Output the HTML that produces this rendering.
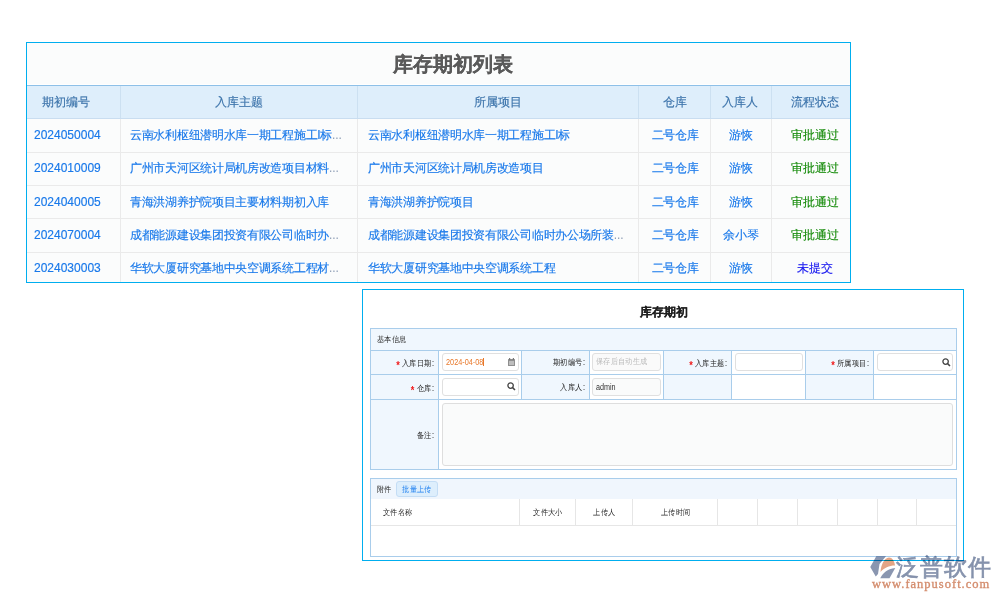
<!DOCTYPE html><html><head><meta charset="utf-8"><style>
html,body{margin:0;padding:0;width:1000px;height:600px;overflow:hidden;background:#fff;}
body{position:relative;font-family:"Liberation Sans",sans-serif;}
div{box-sizing:border-box;}
.t{position:absolute;white-space:nowrap;overflow:visible;}
</style></head><body>
<div style="position:absolute;left:26px;top:42px;width:825px;height:241px;border:1px solid #00AEEF;background:#FBFCFC;"></div>
<div class="t" style="left:353px;top:44px;width:200px;height:41px;line-height:41px;text-align:center;font-size:20px;font-weight:bold;color:#5A5A5A;-webkit-text-stroke:0.2px #5A5A5A;">库存期初列表</div>
<div style="position:absolute;left:27px;top:84px;width:823px;height:1px;background:#fff;"></div>
<div style="position:absolute;left:27px;top:85px;width:823px;height:1px;background:#8DC0E8;"></div>
<div style="position:absolute;left:27px;top:86px;width:823px;height:32px;background:#DEEEFB;"></div>
<div style="position:absolute;left:27px;top:118px;width:823px;height:1px;background:#C9DDF0;"></div>
<div style="position:absolute;left:120px;top:86px;width:1px;height:32px;background:#CCE0F1;"></div>
<div style="position:absolute;left:120px;top:119px;width:1px;height:163px;background:#EAEAEA;"></div>
<div style="position:absolute;left:357px;top:86px;width:1px;height:32px;background:#CCE0F1;"></div>
<div style="position:absolute;left:357px;top:119px;width:1px;height:163px;background:#EAEAEA;"></div>
<div style="position:absolute;left:638px;top:86px;width:1px;height:32px;background:#CCE0F1;"></div>
<div style="position:absolute;left:638px;top:119px;width:1px;height:163px;background:#EAEAEA;"></div>
<div style="position:absolute;left:710px;top:86px;width:1px;height:32px;background:#CCE0F1;"></div>
<div style="position:absolute;left:710px;top:119px;width:1px;height:163px;background:#EAEAEA;"></div>
<div style="position:absolute;left:771px;top:86px;width:1px;height:32px;background:#CCE0F1;"></div>
<div style="position:absolute;left:771px;top:119px;width:1px;height:163px;background:#EAEAEA;"></div>
<div class="t" style="left:6px;top:86px;width:120px;height:32px;line-height:32px;text-align:center;font-size:12px;color:#3A72AA;-webkit-text-stroke:0.15px #3A72AA;">期初编号</div>
<div class="t" style="left:179px;top:86px;width:120px;height:32px;line-height:32px;text-align:center;font-size:12px;color:#3A72AA;-webkit-text-stroke:0.15px #3A72AA;">入库主题</div>
<div class="t" style="left:438px;top:86px;width:120px;height:32px;line-height:32px;text-align:center;font-size:12px;color:#3A72AA;-webkit-text-stroke:0.15px #3A72AA;">所属项目</div>
<div class="t" style="left:614.5px;top:86px;width:120px;height:32px;line-height:32px;text-align:center;font-size:12px;color:#3A72AA;-webkit-text-stroke:0.15px #3A72AA;">仓库</div>
<div class="t" style="left:680px;top:86px;width:120px;height:32px;line-height:32px;text-align:center;font-size:12px;color:#3A72AA;-webkit-text-stroke:0.15px #3A72AA;">入库人</div>
<div class="t" style="left:755px;top:86px;width:120px;height:32px;line-height:32px;text-align:center;font-size:12px;color:#3A72AA;-webkit-text-stroke:0.15px #3A72AA;">流程状态</div>
<div style="position:absolute;left:27px;top:152px;width:823px;height:1px;background:#EAEAEA;"></div>
<div class="t" style="left:34px;top:119px;width:85px;height:32px;line-height:32px;color:#1878EA;font-size:12px;letter-spacing:-0.3px;-webkit-text-stroke:0.15px #1878EA;letter-spacing:0;">2024050004</div>
<div class="t" style="left:130px;top:119px;width:225px;height:32px;line-height:32px;color:#1878EA;font-size:12px;letter-spacing:-0.3px;-webkit-text-stroke:0.15px #1878EA;">云南水利枢纽潜明水库一期工程施工I标<span style="letter-spacing:0;color:#8C9CB4;-webkit-text-stroke:0;">...</span></div>
<div class="t" style="left:368px;top:119px;width:268px;height:32px;line-height:32px;color:#1878EA;font-size:12px;letter-spacing:-0.3px;-webkit-text-stroke:0.15px #1878EA;">云南水利枢纽潜明水库一期工程施工I标</div>
<div class="t" style="left:635px;top:119px;width:80px;height:32px;line-height:32px;text-align:center;color:#1878EA;font-size:12px;letter-spacing:-0.3px;-webkit-text-stroke:0.15px #1878EA;">二号仓库</div>
<div class="t" style="left:701px;top:119px;width:80px;height:32px;line-height:32px;text-align:center;color:#1878EA;font-size:12px;letter-spacing:-0.3px;-webkit-text-stroke:0.15px #1878EA;">游恢</div>
<div class="t" style="left:775px;top:119px;width:80px;height:32px;line-height:32px;text-align:center;font-size:12px;color:#148A08;-webkit-text-stroke:0.15px #148A08;">审批通过</div>
<div style="position:absolute;left:27px;top:185px;width:823px;height:1px;background:#EAEAEA;"></div>
<div class="t" style="left:34px;top:152px;width:85px;height:32px;line-height:32px;color:#1878EA;font-size:12px;letter-spacing:-0.3px;-webkit-text-stroke:0.15px #1878EA;letter-spacing:0;">2024010009</div>
<div class="t" style="left:130px;top:152px;width:225px;height:32px;line-height:32px;color:#1878EA;font-size:12px;letter-spacing:-0.3px;-webkit-text-stroke:0.15px #1878EA;">广州市天河区统计局机房改造项目材料<span style="letter-spacing:0;color:#8C9CB4;-webkit-text-stroke:0;">...</span></div>
<div class="t" style="left:368px;top:152px;width:268px;height:32px;line-height:32px;color:#1878EA;font-size:12px;letter-spacing:-0.3px;-webkit-text-stroke:0.15px #1878EA;">广州市天河区统计局机房改造项目</div>
<div class="t" style="left:635px;top:152px;width:80px;height:32px;line-height:32px;text-align:center;color:#1878EA;font-size:12px;letter-spacing:-0.3px;-webkit-text-stroke:0.15px #1878EA;">二号仓库</div>
<div class="t" style="left:701px;top:152px;width:80px;height:32px;line-height:32px;text-align:center;color:#1878EA;font-size:12px;letter-spacing:-0.3px;-webkit-text-stroke:0.15px #1878EA;">游恢</div>
<div class="t" style="left:775px;top:152px;width:80px;height:32px;line-height:32px;text-align:center;font-size:12px;color:#148A08;-webkit-text-stroke:0.15px #148A08;">审批通过</div>
<div style="position:absolute;left:27px;top:218px;width:823px;height:1px;background:#EAEAEA;"></div>
<div class="t" style="left:34px;top:186px;width:85px;height:32px;line-height:32px;color:#1878EA;font-size:12px;letter-spacing:-0.3px;-webkit-text-stroke:0.15px #1878EA;letter-spacing:0;">2024040005</div>
<div class="t" style="left:130px;top:186px;width:225px;height:32px;line-height:32px;color:#1878EA;font-size:12px;letter-spacing:-0.3px;-webkit-text-stroke:0.15px #1878EA;">青海洪湖养护院项目主要材料期初入库</div>
<div class="t" style="left:368px;top:186px;width:268px;height:32px;line-height:32px;color:#1878EA;font-size:12px;letter-spacing:-0.3px;-webkit-text-stroke:0.15px #1878EA;">青海洪湖养护院项目</div>
<div class="t" style="left:635px;top:186px;width:80px;height:32px;line-height:32px;text-align:center;color:#1878EA;font-size:12px;letter-spacing:-0.3px;-webkit-text-stroke:0.15px #1878EA;">二号仓库</div>
<div class="t" style="left:701px;top:186px;width:80px;height:32px;line-height:32px;text-align:center;color:#1878EA;font-size:12px;letter-spacing:-0.3px;-webkit-text-stroke:0.15px #1878EA;">游恢</div>
<div class="t" style="left:775px;top:186px;width:80px;height:32px;line-height:32px;text-align:center;font-size:12px;color:#148A08;-webkit-text-stroke:0.15px #148A08;">审批通过</div>
<div style="position:absolute;left:27px;top:252px;width:823px;height:1px;background:#EAEAEA;"></div>
<div class="t" style="left:34px;top:219px;width:85px;height:32px;line-height:32px;color:#1878EA;font-size:12px;letter-spacing:-0.3px;-webkit-text-stroke:0.15px #1878EA;letter-spacing:0;">2024070004</div>
<div class="t" style="left:130px;top:219px;width:225px;height:32px;line-height:32px;color:#1878EA;font-size:12px;letter-spacing:-0.3px;-webkit-text-stroke:0.15px #1878EA;">成都能源建设集团投资有限公司临时办<span style="letter-spacing:0;color:#8C9CB4;-webkit-text-stroke:0;">...</span></div>
<div class="t" style="left:368px;top:219px;width:268px;height:32px;line-height:32px;color:#1878EA;font-size:12px;letter-spacing:-0.3px;-webkit-text-stroke:0.15px #1878EA;">成都能源建设集团投资有限公司临时办公场所装<span style="letter-spacing:0;color:#8C9CB4;-webkit-text-stroke:0;">...</span></div>
<div class="t" style="left:635px;top:219px;width:80px;height:32px;line-height:32px;text-align:center;color:#1878EA;font-size:12px;letter-spacing:-0.3px;-webkit-text-stroke:0.15px #1878EA;">二号仓库</div>
<div class="t" style="left:701px;top:219px;width:80px;height:32px;line-height:32px;text-align:center;color:#1878EA;font-size:12px;letter-spacing:-0.3px;-webkit-text-stroke:0.15px #1878EA;">余小琴</div>
<div class="t" style="left:775px;top:219px;width:80px;height:32px;line-height:32px;text-align:center;font-size:12px;color:#148A08;-webkit-text-stroke:0.15px #148A08;">审批通过</div>
<div class="t" style="left:34px;top:252px;width:85px;height:32px;line-height:32px;color:#1878EA;font-size:12px;letter-spacing:-0.3px;-webkit-text-stroke:0.15px #1878EA;letter-spacing:0;">2024030003</div>
<div class="t" style="left:130px;top:252px;width:225px;height:32px;line-height:32px;color:#1878EA;font-size:12px;letter-spacing:-0.3px;-webkit-text-stroke:0.15px #1878EA;">华软大厦研究基地中央空调系统工程材<span style="letter-spacing:0;color:#8C9CB4;-webkit-text-stroke:0;">...</span></div>
<div class="t" style="left:368px;top:252px;width:268px;height:32px;line-height:32px;color:#1878EA;font-size:12px;letter-spacing:-0.3px;-webkit-text-stroke:0.15px #1878EA;">华软大厦研究基地中央空调系统工程</div>
<div class="t" style="left:635px;top:252px;width:80px;height:32px;line-height:32px;text-align:center;color:#1878EA;font-size:12px;letter-spacing:-0.3px;-webkit-text-stroke:0.15px #1878EA;">二号仓库</div>
<div class="t" style="left:701px;top:252px;width:80px;height:32px;line-height:32px;text-align:center;color:#1878EA;font-size:12px;letter-spacing:-0.3px;-webkit-text-stroke:0.15px #1878EA;">游恢</div>
<div class="t" style="left:775px;top:252px;width:80px;height:32px;line-height:32px;text-align:center;font-size:12px;color:#1A1AF0;-webkit-text-stroke:0.15px #1A1AF0;">未提交</div>
<div style="position:absolute;left:362px;top:289px;width:602px;height:272px;border:1px solid #00AEEF;background:#fff;"></div>
<div class="t" style="left:614px;top:300px;width:100px;height:24px;line-height:24px;text-align:center;font-size:12px;font-weight:bold;color:#1E1E1E;-webkit-text-stroke:0.15px #1E1E1E;">库存期初</div>
<div style="position:absolute;left:370px;top:328px;width:587px;height:142px;border:1px solid #A9CDEB;background:#F0F7FE;"></div>
<div class="t" style="left:377px;top:329px;height:21px;line-height:21px;font-size:8px;color:#2A2A2A;transform:scale(0.93,1.03);transform-origin:0 50%;">基本信息</div>
<div style="position:absolute;left:371px;top:350px;width:585px;height:1px;background:#A9CDEB;"></div>
<div style="position:absolute;left:371px;top:374px;width:585px;height:1px;background:#A9CDEB;"></div>
<div style="position:absolute;left:371px;top:399px;width:585px;height:1px;background:#A9CDEB;"></div>
<div style="position:absolute;left:439px;top:351px;width:82px;height:23px;background:#fff;"></div>
<div style="position:absolute;left:439px;top:375px;width:82px;height:24px;background:#fff;"></div>
<div style="position:absolute;left:590px;top:351px;width:73px;height:23px;background:#fff;"></div>
<div style="position:absolute;left:590px;top:375px;width:73px;height:24px;background:#fff;"></div>
<div style="position:absolute;left:732px;top:351px;width:73px;height:23px;background:#fff;"></div>
<div style="position:absolute;left:732px;top:375px;width:73px;height:24px;background:#fff;"></div>
<div style="position:absolute;left:874px;top:351px;width:82px;height:23px;background:#fff;"></div>
<div style="position:absolute;left:874px;top:375px;width:82px;height:24px;background:#fff;"></div>
<div style="position:absolute;left:439px;top:400px;width:517px;height:69px;background:#fff;"></div>
<div style="position:absolute;left:438px;top:351px;width:1px;height:48px;background:#A9CDEB;"></div>
<div style="position:absolute;left:521px;top:351px;width:1px;height:48px;background:#A9CDEB;"></div>
<div style="position:absolute;left:589px;top:351px;width:1px;height:48px;background:#A9CDEB;"></div>
<div style="position:absolute;left:663px;top:351px;width:1px;height:48px;background:#A9CDEB;"></div>
<div style="position:absolute;left:731px;top:351px;width:1px;height:48px;background:#A9CDEB;"></div>
<div style="position:absolute;left:805px;top:351px;width:1px;height:48px;background:#A9CDEB;"></div>
<div style="position:absolute;left:873px;top:351px;width:1px;height:48px;background:#A9CDEB;"></div>
<div style="position:absolute;left:438px;top:400px;width:1px;height:69px;background:#A9CDEB;"></div>
<div class="t" style="left:374px;top:351px;width:60px;height:24px;line-height:24px;font-size:8px;color:#222;text-align:right;transform:scale(0.92,1.03);transform-origin:100% 50%;"><span style="color:#F01818;font-size:10px;font-weight:bold;position:relative;top:2.5px;margin-right:2.5px;">*</span>入库日期<span style="margin-left:0.5px">:</span></div>
<div class="t" style="left:524px;top:351px;width:61px;height:24px;line-height:24px;font-size:8px;color:#222;text-align:right;transform:scale(0.92,1.03);transform-origin:100% 50%;">期初编号<span style="margin-left:0.5px">:</span></div>
<div class="t" style="left:667px;top:351px;width:60px;height:24px;line-height:24px;font-size:8px;color:#222;text-align:right;transform:scale(0.92,1.03);transform-origin:100% 50%;"><span style="color:#F01818;font-size:10px;font-weight:bold;position:relative;top:2.5px;margin-right:2.5px;">*</span>入库主题<span style="margin-left:0.5px">:</span></div>
<div class="t" style="left:808px;top:351px;width:61px;height:24px;line-height:24px;font-size:8px;color:#222;text-align:right;transform:scale(0.92,1.03);transform-origin:100% 50%;"><span style="color:#F01818;font-size:10px;font-weight:bold;position:relative;top:2.5px;margin-right:2.5px;">*</span>所属项目<span style="margin-left:0.5px">:</span></div>
<div class="t" style="left:374px;top:376px;width:60px;height:24px;line-height:24px;font-size:8px;color:#222;text-align:right;transform:scale(0.92,1.03);transform-origin:100% 50%;"><span style="color:#F01818;font-size:10px;font-weight:bold;position:relative;top:2.5px;margin-right:2.5px;">*</span>仓库<span style="margin-left:0.5px">:</span></div>
<div class="t" style="left:524px;top:376px;width:61px;height:24px;line-height:24px;font-size:8px;color:#222;text-align:right;transform:scale(0.92,1.03);transform-origin:100% 50%;">入库人<span style="margin-left:0.5px">:</span></div>
<div class="t" style="left:374px;top:401px;width:60px;height:69px;line-height:69px;font-size:8px;color:#222;text-align:right;transform:scale(0.92,1.03);transform-origin:100% 50%;">备注<span style="margin-left:0.5px">:</span></div>
<div style="position:absolute;left:442px;top:353px;width:77px;height:18px;border:1px solid #E0E0E0;border-radius:3px;background:#fff;"></div>
<div style="position:absolute;left:592px;top:353px;width:69px;height:18px;border:1px solid #E0E0E0;border-radius:3px;background:#fff;background:#FAFAFA;"></div>
<div style="position:absolute;left:735px;top:353px;width:68px;height:18px;border:1px solid #E0E0E0;border-radius:3px;background:#fff;"></div>
<div style="position:absolute;left:877px;top:353px;width:76px;height:18px;border:1px solid #E0E0E0;border-radius:3px;background:#fff;"></div>
<div style="position:absolute;left:442px;top:378px;width:77px;height:18px;border:1px solid #E0E0E0;border-radius:3px;background:#fff;"></div>
<div style="position:absolute;left:592px;top:378px;width:69px;height:18px;border:1px solid #E0E0E0;border-radius:3px;background:#fff;background:#FAFBFB;"></div>
<div style="position:absolute;left:442px;top:403px;width:511px;height:63px;border:1px solid #DEDEDE;border-radius:3px;background:#FAFBFB;"></div>
<div class="t" style="left:446px;top:353px;width:60px;height:18px;line-height:18px;font-size:8.5px;color:#E8782A;transform:scaleX(0.86);transform-origin:0 50%;">2024-04-08</div>
<div style="position:absolute;left:483px;top:358px;width:1px;height:8px;background:#E8782A;"></div>
<div class="t" style="left:596px;top:353px;width:64px;height:18px;line-height:18px;font-size:8px;color:#BBB;transform:scale(0.92,1.03);transform-origin:0 50%;">保存后自动生成</div>
<div class="t" style="left:596px;top:378px;width:64px;height:18px;line-height:18px;font-size:9px;color:#333;transform:scaleX(0.8);transform-origin:0 50%;">admin</div>
<svg style="position:absolute;left:508px;top:358px" width="7" height="8" viewBox="0 0 7 8"><rect x="0" y="1" width="7" height="7" rx="0.5" fill="#8E8E8E"/><rect x="1" y="3" width="5" height="4" fill="#BDBDBD"/><rect x="1" y="0" width="1.2" height="2" fill="#777"/><rect x="4.8" y="0" width="1.2" height="2" fill="#777"/></svg>
<svg style="position:absolute;left:507px;top:382px" width="9" height="9" viewBox="0 0 9 9"><circle cx="3.6" cy="3.6" r="2.7" fill="none" stroke="#444" stroke-width="1.3"/><line x1="5.6" y1="5.6" x2="8" y2="8" stroke="#444" stroke-width="1.5"/></svg>
<svg style="position:absolute;left:942px;top:358px" width="9" height="9" viewBox="0 0 9 9"><circle cx="3.6" cy="3.6" r="2.7" fill="none" stroke="#444" stroke-width="1.3"/><line x1="5.6" y1="5.6" x2="8" y2="8" stroke="#444" stroke-width="1.5"/></svg>
<div style="position:absolute;left:370px;top:478px;width:587px;height:79px;border:1px solid #A9CDEB;background:#fff;"></div>
<div style="position:absolute;left:371px;top:479px;width:585px;height:20px;background:#F0F6FD;"></div>
<div class="t" style="left:377px;top:480px;width:20px;height:20px;line-height:20px;font-size:8px;color:#2A2A2A;transform:scale(0.92,1.03);transform-origin:0 50%;">附件</div>
<div style="position:absolute;left:396px;top:481px;width:42px;height:16px;border:1px solid #C4DDF5;border-radius:3px;background:#DDEEFC;"></div>
<div class="t" style="left:396px;top:482px;width:42px;height:16px;line-height:16px;font-size:8px;color:#1F80F0;text-align:center;transform:scale(0.92,1.03);">批量上传</div>
<div style="position:absolute;left:371px;top:525px;width:585px;height:1px;background:#E6E6E6;"></div>
<div style="position:absolute;left:519px;top:499px;width:1px;height:26px;background:#E6E6E6;"></div>
<div style="position:absolute;left:575px;top:499px;width:1px;height:26px;background:#E6E6E6;"></div>
<div style="position:absolute;left:632px;top:499px;width:1px;height:26px;background:#E6E6E6;"></div>
<div style="position:absolute;left:717px;top:499px;width:1px;height:26px;background:#E6E6E6;"></div>
<div style="position:absolute;left:757px;top:499px;width:1px;height:26px;background:#E6E6E6;"></div>
<div style="position:absolute;left:797px;top:499px;width:1px;height:26px;background:#E6E6E6;"></div>
<div style="position:absolute;left:837px;top:499px;width:1px;height:26px;background:#E6E6E6;"></div>
<div style="position:absolute;left:877px;top:499px;width:1px;height:26px;background:#E6E6E6;"></div>
<div style="position:absolute;left:916px;top:499px;width:1px;height:26px;background:#E6E6E6;"></div>
<div class="t" style="left:383px;top:500px;width:60px;height:26px;line-height:26px;font-size:8px;color:#2A2A2A;transform:scale(0.92,1.03);transform-origin:0 50%;">文件名称</div>
<div class="t" style="left:520px;top:500px;width:56px;height:26px;line-height:26px;font-size:8px;color:#2A2A2A;transform:scale(0.92,1.03);text-align:center;">文件大小</div>
<div class="t" style="left:576px;top:500px;width:57px;height:26px;line-height:26px;font-size:8px;color:#2A2A2A;transform:scale(0.92,1.03);text-align:center;">上传人</div>
<div class="t" style="left:633px;top:500px;width:85px;height:26px;line-height:26px;font-size:8px;color:#2A2A2A;transform:scale(0.92,1.03);text-align:center;">上传时间</div>
<svg style="position:absolute;left:866px;top:552px;mix-blend-mode:multiply" width="34" height="30" viewBox="0 0 34 30">
<path d="M10.25 4.25 L20 4.25 L13.5 12 L12 22 L9.75 24.5 L4.25 15 Z" fill="#8A96B0"/>
<path d="M14.5 20 C15 13 18 6 23 5.5 C26 5.5 28.5 9 29 13.5 C23 13.5 18 16 14.5 20 Z" fill="#E3A586"/>
<path d="M14.25 26.25 C17 21 21 17 29.25 16 L23.5 26.25 Z" fill="#8A96B0"/>
</svg>
<div class="t" style="left:896px;top:553px;width:100px;height:28px;line-height:28px;mix-blend-mode:multiply;font-size:23px;color:#8592AC;letter-spacing:1px;font-weight:500;-webkit-text-stroke:0.7px #8592AC;">泛普软件</div>
<div class="t" style="left:872px;top:577px;width:125px;height:14px;line-height:14px;mix-blend-mode:multiply;font-family:'Liberation Serif',serif;font-size:12.5px;color:#D48D6E;letter-spacing:1px;-webkit-text-stroke:0.35px #D48D6E;">www.fanpusoft.com</div>
</body></html>
